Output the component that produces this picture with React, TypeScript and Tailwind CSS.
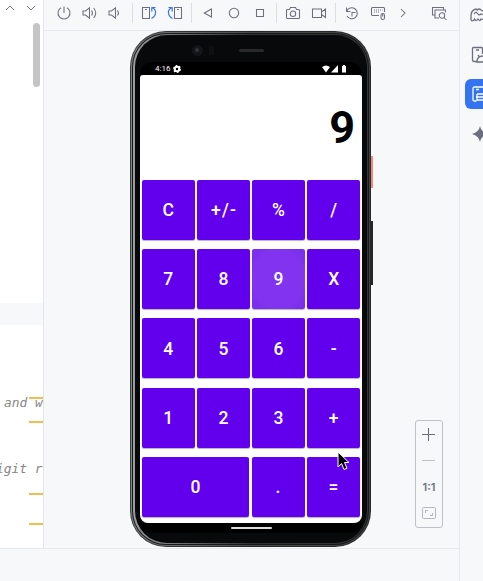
import type { ReactNode } from "react";

function Icon({ children, className = "" }: { children: ReactNode; className?: string }) {
  return (
    <svg viewBox="0 0 16 16" fill="none" stroke="#6c707e" strokeWidth="1.05" className={"h-4 w-4 shrink-0 overflow-visible " + className}>
      {children}
    </svg>
  );
}

function Separator({ className = "" }: { className?: string }) {
  return <div className={"h-5 w-px shrink-0 bg-[#dcdee3] " + className} />;
}

function Toolbar() {
  return (
    <div className="flex h-[31px] shrink-0 items-center border-b border-[#e6e8ec] pb-1">
      <Icon className="ml-3">
        <path d="M8 1.5V8M5 2.8A6 6 0 1 0 11 2.8" />
      </Icon>
      <Icon className="ml-[9px]">
        <path d="M2 6H4.5L8.5 2.8V13.2L4.500 10H2ZM10.500 5.500Q12.500 8 10.500 10.500M12.700 3Q16.700 8 12.700 13" />
      </Icon>
      <Icon className="ml-[10px]">
        <path d="M2 6H4.500L8.500 2.800V13.200L4.500 10H2ZM10.500 5.500Q12.500 8 10.500 10.500" />
      </Icon>
      <Separator className="ml-[9px]" />
      <Icon className="ml-[8px]">
        <path d="M1.500 2.500H8.500V13.500H1.500ZM4 4.500H6" />
        <path d="M10.500 2.500H14.500M10.800 2.500V6.500M11 2.500Q15.300 4.500 14.500 8.500Q13.800 12 10.500 13.500" stroke="#3574f0" strokeWidth="1.200" />
      </Icon>
      <Icon className="ml-[10px]">
        <path d="M7.500 2.500H14.500V13.500H7.500ZM10 4.500H12" />
        <path d="M5.500 2.500H1.500M5.200 2.500V6.500M5 2.500Q.7 4.500 1.500 8.500Q2.200 12 5.500 13.500" stroke="#3574f0" strokeWidth="1.200" />
      </Icon>
      <Separator className="ml-[8px]" />
      <Icon className="ml-[8px]">
        <path d="M4.300 8L11.500 4V12Z" />
      </Icon>
      <Icon className="ml-[10px]">
        <circle cx="8" cy="8" r="4.700" />
      </Icon>
      <Icon className="ml-[10px]">
        <path d="M4.500 4.500H11.500V11.500H4.500Z" />
      </Icon>
      <Separator className="ml-[8px]" />
      <Icon className="ml-[8px]">
        <path d="M2.500 4.500H4.500L5.500 2.500H10.500L11.500 4.500H13.500Q14.500 4.500 14.500 5.500V12.500Q14.500 13.500 13.500 13.500H2.500Q1.500 13.500 1.500 12.500V5.500Q1.500 4.500 2.500 4.500Z" />
        <circle cx="8" cy="8.700" r="2.700" />
      </Icon>
      <Icon className="ml-[10px]">
        <path d="M1.500 4H10.500V12.500H1.500ZM10.500 7L14.500 4V12.500L10.500 9.500" />
      </Icon>
      <Separator className="ml-[8px]" />
      <Icon className="ml-[8px]">
        <path d="M2.500 2.500V6.500H6.500M2.700 6.200A5.500 5.500 0 1 1 3 11M11.500 7.500H8V11.500" />
      </Icon>
      <Icon className="ml-[10px]">
        <path d="M9 10.500H2.500Q1.500 10.500 1.500 9.500V3.500Q1.500 2.500 2.500 2.500H13.500Q14.500 2.500 14.500 3.500V7" />
        <path d="M4 5H12.500M4 7H10" strokeDasharray="1 1" />
        <rect x="11" y="8.500" width="3.500" height="6" rx="1.700" />
        <path d="M12.700 9V11.500" />
      </Icon>
      <Icon className="ml-[9px]">
        <path d="M6 4L10 8L6 12" />
      </Icon>
      <Icon className="ml-[20px]">
        <path d="M4 10H1.500V2.500H12.500V5M8 13H4V5H14.500V7.500" />
        <circle cx="11" cy="10.500" r="2.700" />
        <path d="M13 12.500L15.500 15" />
      </Icon>
    </div>
  );
}

function Editor() {
  return (
    <div className="flex w-[44px] shrink-0 flex-col overflow-hidden border-r border-[#e3e5e9] bg-white">
      <div className="flex h-4 items-center">
        <svg viewBox="0 0 43 16" fill="none" stroke="#777b88" className="h-4 w-[43px]">
          <path d="M6 10L10 6L14 10M27 6L31 10L35 6" />
        </svg>
      </div>
      <div className="mt-[7px] mr-[3px] h-16 w-[7px] self-end rounded-full bg-[#c5c5c5]" />
      <div className="mt-[216px] h-[22px] shrink-0 bg-[#f7f8fa]" />
      <div className="relative h-[223px] overflow-hidden text-[12.900px] text-[#868686] italic">
        <pre className="mt-[70px] ml-[4px] h-4 font-['DejaVu_Sans_Mono',monospace] leading-4">and w</pre>
        <pre className="mt-[50px] ml-[-4px] h-4 font-['DejaVu_Sans_Mono',monospace] leading-4">igit r</pre>
        <i className="absolute top-[72px] right-0 h-[2px] w-[14px] bg-[#f2bd50]" />
        <i className="absolute top-[96px] right-0 h-[2px] w-[14px] bg-[#f2bd50]" />
        <i className="absolute top-[168px] right-0 h-[2px] w-[14px] bg-[#f2bd50]" />
        <i className="absolute top-[198px] right-0 h-[2px] w-[14px] bg-[#f2bd50]" />
      </div>
    </div>
  );
}

const keys = ["C", "+/-", "%", "/", "7", "8", "9", "X", "4", "5", "6", "-", "1", "2", "3", "+"];
const keyStyle = "flex items-center justify-center rounded-[2px] pt-[2px] text-[17.500px] leading-none font-medium tracking-[1.200px] indent-[1.200px] text-white shadow-[0_1px_1px_rgba(0,0,0,0.3)]";

function Phone() {
  return (
    <div className="relative ml-[86px] h-[516px] w-[241px] rounded-[36px] bg-linear-to-r from-[#3b3e3e] via-[#252626] to-[#292a2a] p-px">
      <div className="absolute top-[125px] -right-[2px] h-8 w-[2px] bg-[#ed8b7b]" />
      <div className="absolute top-[190px] -right-[2px] h-16 w-[2px] bg-[#252728]" />
      <div className="h-full rounded-[35px] bg-linear-to-r from-[#7e8282] via-[#484b4b] to-[#414343] p-px">
        <div className="h-full rounded-[34px] bg-[#171919] p-px">
          <div className="h-full rounded-[33px] bg-linear-to-r from-[#9a9d9d] via-[#303232] to-[#343636] p-px pl-[2px]">
            <div className="flex h-full flex-col overflow-hidden rounded-[32px] bg-[#08090b] px-[5px] font-[Roboto,sans-serif]">
              <div className="relative h-[27px] shrink-0">
                <div className="absolute top-[10px] left-[52px] h-[11px] w-[11px] rounded-full bg-[#141519] p-[3px]">
                  <div className="h-[4px] w-[4px] rounded-full bg-[#30343c]" />
                </div>
                <div className="absolute top-[14px] left-[99px] h-[3px] w-[25px] rounded-sm bg-[#29292b]" />
                <div className="absolute top-[11px] left-[69px] h-[9px] w-[5px] bg-[#0e0f11]" />
              </div>
              <div className="flex h-[12.500px] shrink-0 items-center rounded-t-[20px] bg-black pt-px pl-[15px] text-[8px] leading-none text-white">
                <span>4:16</span>
                <svg viewBox="0 0 16 16" className="ml-[3px] h-2 w-2" fill="none" stroke="white">
                  <circle cx="8" cy="8" r="4.500" strokeWidth="4" />
                  <circle cx="8" cy="8" r="6.500" strokeWidth="3" strokeDasharray="3.400" />
                </svg>
                <svg viewBox="0 0 27 8" className="mr-[13px] ml-auto h-2 w-[27px]" fill="white">
                  <path d="M0 2Q4 -1 8 2L4 7.500ZM9 7.500L16 0V7.500ZM20 1H21V0H23V1H24V7.500H20Z" />
                </svg>
              </div>
              <div className="flex h-[448.500px] shrink-0 flex-col overflow-hidden rounded-[3px_3px_8px_8px] bg-white px-[2px]">
                <div className="flex h-[105px] shrink-0 items-center justify-end pr-[5px] text-[45px] leading-none font-bold text-black">9</div>
                <div className="grid grid-cols-4 gap-x-[2.500px] gap-y-[9.400px]">
                  {keys.map((k) => (
                    <div key={k} className={keyStyle + " h-[60px] " + (k === "9" ? "bg-radial from-[#8133ef] from-70% to-[#7b2eed] to-85%" : "bg-[#6200ee]")}>{k}</div>
                  ))}
                </div>
                <div className="mt-[9.400px] grid grid-cols-[107px_53px_53px] justify-between">
                  {["0", ".", "="].map((k) => (
                    <div key={k} className={keyStyle + " h-[60px] bg-[#6200ee]"}>{k}</div>
                  ))}
                </div>
              </div>
              <div className="flex h-[10px] shrink-0 items-center justify-center rounded-b-[20px] bg-black">
                <div className="h-[1.500px] w-[41px] rounded-full bg-[#ddd]" />
              </div>
            </div>
          </div>
        </div>
      </div>
    </div>
  );
}

function ZoomControls() {
  return (
    <div className="absolute top-[420px] left-[371px] flex h-[108px] w-7 flex-col items-center rounded-[3px] border border-[#bfc1c6] bg-[#f7f8fa]">
      <svg viewBox="0 0 26 106" fill="none" className="absolute inset-0 h-[106px] w-[26px]">
        <path d="M6 13.500H19M12.500 7V20" stroke="#6c707e" strokeWidth="1.100" />
        <path d="M6 39.500H19" stroke="#c0c2c8" />
        <rect x="6.500" y="86.500" width="13" height="11" rx="1" stroke="#b5b7bd" />
        <path d="M9.500 92V89.500H12M14 94.500H16.500V92" stroke="#b5b7bd" />
      </svg>
      <span className="mt-[60px] font-[Inter,sans-serif] text-[11px] leading-3 font-semibold text-[#6c707e]">1:1</span>
    </div>
  );
}

function ToolStrip() {
  return (
    <aside className="flex w-[23px] shrink-0 flex-col overflow-hidden bg-[#f7f8fa]">
      <Icon className="mt-[7px] ml-[10px]">
        <path d="M1 13V9Q1 3 6 2L7.500 3Q9 1 11 3L15 5M1 13Q3 15 4.500 12Q6 15 8 12Q10 15 11 12L14 13M4 7Q6 4 7 6Q9 9 11 7L14 8" strokeWidth="1.300" />
      </Icon>
      <Icon className="mt-[24px] ml-[11px]">
        <path d="M6 14.500H3Q1.500 14.500 1.500 13V1.500Q1.500 .5 2.500 .5H10.500Q11.500 .5 11.500 2V7M5 3H8M6 15Q6 9 12 9T18 15ZM8.500 10L7 8" strokeWidth="1.300" />
      </Icon>
      <div className="mt-[16px] ml-[5px] flex h-[30px] w-[30px] shrink-0 items-center rounded-[6px] bg-[#3574f0] pl-[6px]">
        <Icon className="!stroke-white">
          <path d="M5.500 15H3.500Q2 15 2 13.500V2.500Q2 1 3.500 1H13V5M5 3.500H8M6 8V14H16M6 8H16M5 11H16" stroke="white" strokeWidth="1.300" />
        </Icon>
      </div>
      <svg viewBox="0 0 16 16" className="mt-[17px] ml-[12px] h-4 w-4 shrink-0" fill="#6c707e">
        <path d="M8 0Q9 6 16 8Q9 10 8 16Q7 10 0 8Q7 6 8 0Z" />
      </svg>
    </aside>
  );
}

export default function App() {
  return (
    <div className="flex h-[581px] w-[483px] overflow-hidden bg-[#f7f8fa]">
      <div className="flex w-[460px] shrink-0 flex-col border-r border-[#e6e8ec]">
        <div className="flex h-[548px] shrink-0">
          <Editor />
          <main className="relative w-[415px] shrink-0">
            <Toolbar />
            <Phone />
            <ZoomControls />
            <svg viewBox="0 0 12 20" className="absolute top-[451px] left-[293px] h-5 w-3 overflow-visible">
              <path d="M1 1V16L4.500 12.500L7 18.500L10 17.200L7.500 11.500H12Z" fill="black" stroke="white" strokeWidth="1" />
            </svg>
          </main>
        </div>
        <footer className="flex-1 border-t border-[#e6e8ec]" />
      </div>
      <ToolStrip />
    </div>
  );
}
